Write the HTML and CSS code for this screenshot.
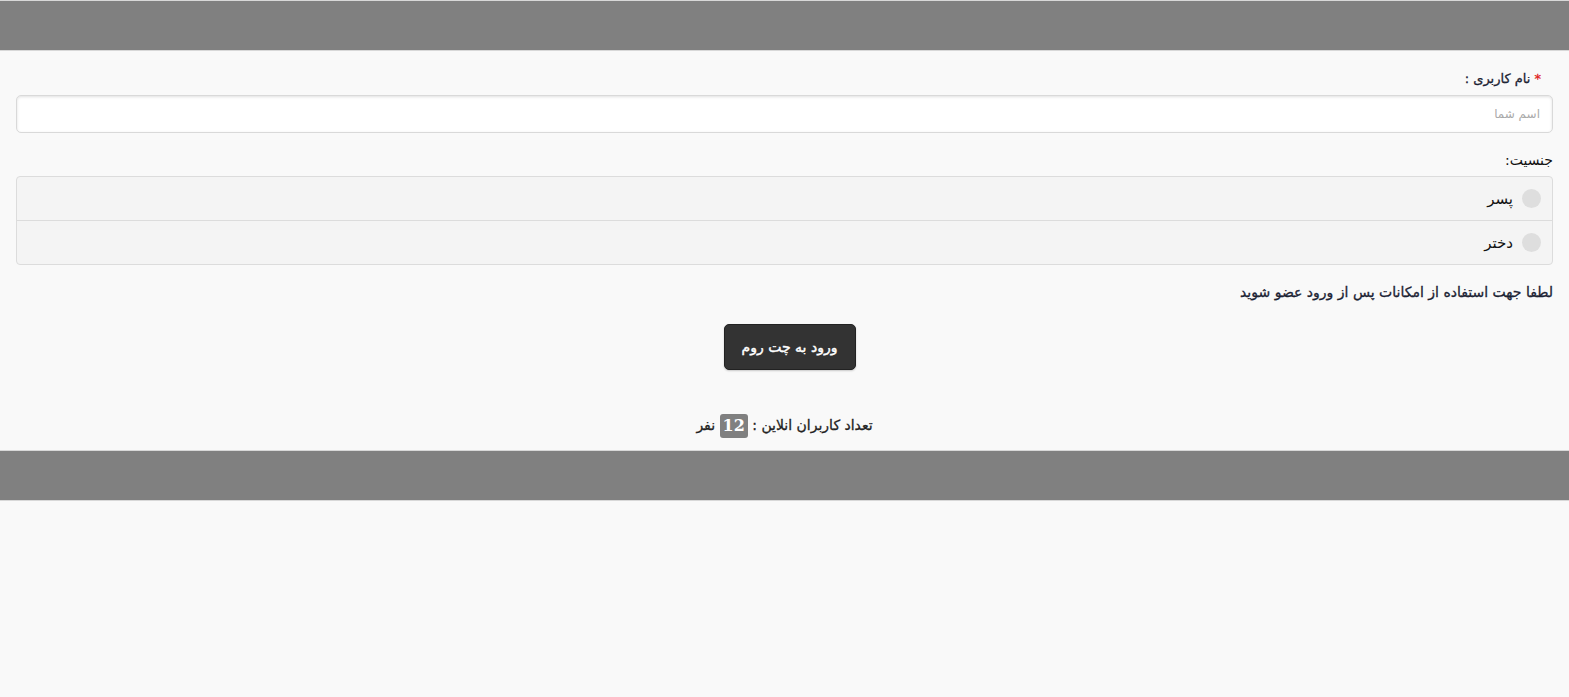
FILE: index.html
```html
<!DOCTYPE html>
<html lang="fa" dir="rtl">
<head>
<meta charset="utf-8">
<title>ورود به چت روم</title>
<link rel="stylesheet" href="styles.css">
</head>
<body>
<header class="bar top-bar"></header>
<main class="content">
  <label class="field-label" for="username"><span class="req">*</span> نام کاربری :</label>
  <input class="text-input" id="username" type="text" placeholder="اسم شما">
  <div class="field-label gender-label">جنسیت:</div>
  <div class="radio-group">
    <label class="radio-row"><span class="radio-dot"></span><span class="radio-text">پسر</span></label>
    <label class="radio-row"><span class="radio-dot"></span><span class="radio-text">دختر</span></label>
  </div>
  <p class="notice">لطفا جهت استفاده از امکانات پس از ورود عضو شوید</p>
  <div class="btn-wrap"><button class="enter-btn" type="button">ورود به چت روم</button></div>
  <p class="online">تعداد کاربران انلاین : <span class="badge">12</span> نفر</p>
</main>
<footer class="bar bottom-bar"></footer>
</body>
</html>
```
FILE: styles.css
```css
html, body {
  margin: 0;
  padding: 0;
  background: #f9f9f9;
}
body {
  font-family: "DejaVu Sans", "Noto Sans", sans-serif;
  font-size: 14px;
  color: #222;
  min-height: 697px;
}
.bar {
  background: #808080;
  height: 49px;
  border-top: 1px solid #d8d8d8;
  border-bottom: 1px solid #d8d8d8;
}
.content {
  padding: 0 16px 12px 16px;
  display: flex;
  flex-direction: column;
}
.field-label {
  display: block;
  margin-top: 18px;
  line-height: 20px;
  height: 20px;
  font-size: 13px;
  color: #1b2233;
  padding-right: 12px;
  -webkit-text-stroke: 0.3px currentColor;
}
.req {
  color: #e02020;
}
.text-input {
  margin-top: 6px;
  height: 38px;
  box-sizing: border-box;
  width: 100%;
  border: 1px solid #d9d9d9;
  border-radius: 5px;
  background: #fff;
  box-shadow: inset 0 1px 3px rgba(0,0,0,0.12);
  padding: 0 12px;
  font-family: inherit;
  font-size: 12px;
  direction: rtl;
}
.text-input::placeholder {
  color: #aaa;
}
.gender-label {
  padding-right: 0;
  margin-top: 17px;
  font-size: 14px;
  color: #111;
  -webkit-text-stroke: 0;
}
.radio-group {
  margin-top: 6px;
  border: 1px solid #dcdcdc;
  border-radius: 4px;
  background: #f4f4f4;
  display: flex;
  flex-direction: column;
}
.radio-row {
  height: 43px;
  display: flex;
  align-items: center;
  gap: 9px;
  padding-right: 11px;
}
.radio-row + .radio-row {
  border-top: 1px solid #dcdcdc;
}
.radio-dot {
  width: 19px;
  height: 19px;
  border-radius: 50%;
  background: #dedede;
}
.radio-text {
  font-size: 15px;
  color: #111;
}
.notice {
  margin: 17px 0 0;
  line-height: 20px;
  font-size: 14px;
  color: #1b2233;
  -webkit-text-stroke: 0.3px currentColor;
}
.btn-wrap {
  margin-top: 22px;
  display: flex;
  justify-content: center;
}
.enter-btn {
  width: 132px;
  height: 46px;
  margin-left: 10px;
  background: #333;
  color: #fff;
  border: 1px solid #222;
  border-radius: 5px;
  font-family: inherit;
  font-size: 14px;
  -webkit-text-stroke: 0.4px currentColor;
  box-shadow: 0 1px 2px rgba(0,0,0,0.2);
}
.online {
  margin: 43px 0 0;
  text-align: center;
  line-height: 24px;
  font-size: 14px;
  color: #222;
  -webkit-text-stroke: 0.3px currentColor;
}
.badge {
  display: inline-block;
  background: #808080;
  color: #fff;
  font-family: "DejaVu Serif", "Liberation Serif", serif;
  font-size: 16px;
  font-weight: bold;
  padding: 0 3px;
  line-height: 24px;
  border-radius: 3px;
  vertical-align: middle;
  -webkit-text-stroke: 0;
}
```
